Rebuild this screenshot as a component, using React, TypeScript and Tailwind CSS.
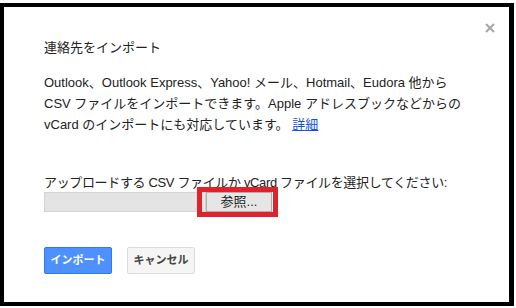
export default function App() {
  const font = { fontFamily: '"Liberation Sans", Arial, "Noto Sans CJK JP", sans-serif' };
  return (
    <div className="w-[516px] h-[308px] bg-white pt-[3px]" style={font}>
      <div className="relative w-[514px] h-[303px] border-black border-l-4 border-t-4 border-r-[5px] border-b-4 pl-[40px] pt-[31px] text-[#222]">
        {/* close */}
        <button className="absolute right-[14px] top-[16px] w-[10px] h-[10px]">
          <svg width="10" height="10" viewBox="0 0 10 10">
            <path d="M1 1L9 9M9 1L1 9" stroke="#a6a6a6" strokeWidth="2" />
          </svg>
        </button>

        <h1 className="text-[13px] leading-[20px] font-normal">連絡先をインポート</h1>

        <p className="mt-[14px] text-[13px] leading-[21px] whitespace-nowrap">
          Outlook、Outlook Express、Yahoo! メール、Hotmail、Eudora 他から
          <br />
          CSV ファイルをインポートできます。Apple アドレスブックなどからの
          <br />
          vCard のインポートにも対応しています。{' '}
          <a href="#" className="text-[#1155cc] underline">詳細</a>
        </p>

        <p className="mt-[39px] text-[13px] leading-[18px] tracking-[-0.35px] whitespace-nowrap">
          アップロードする CSV ファイルか vCard ファイルを選択してください:
        </p>

        <div className="relative flex w-[228px] h-[20px]">
          <div className="w-[162px] h-full bg-[#e4e4e4] border border-[#d4d4d4]" />
          <button className="w-[66px] h-full bg-[#e6e6e6] border border-[#adadad] text-[13px] leading-[18px] text-[#222]">
            参照...
          </button>
          {/* annotation box */}
          <div className="absolute left-[153px] top-[-5px] w-[81px] h-[30px] border-[5px] border-[#e0222b]" />
        </div>

        <div className="mt-[35px] flex gap-[15px]">
          <button className="w-[68px] h-[27px] rounded-[2px] bg-[#4d90fe] border border-[#3079ed] text-white text-[11px] font-bold">
            インポート
          </button>
          <button className="w-[68px] h-[27px] rounded-[2px] bg-[#f5f5f5] border border-[#dcdcdc] text-[#444] text-[11px] font-bold">
            キャンセル
          </button>
        </div>
      </div>
    </div>
  );
}
